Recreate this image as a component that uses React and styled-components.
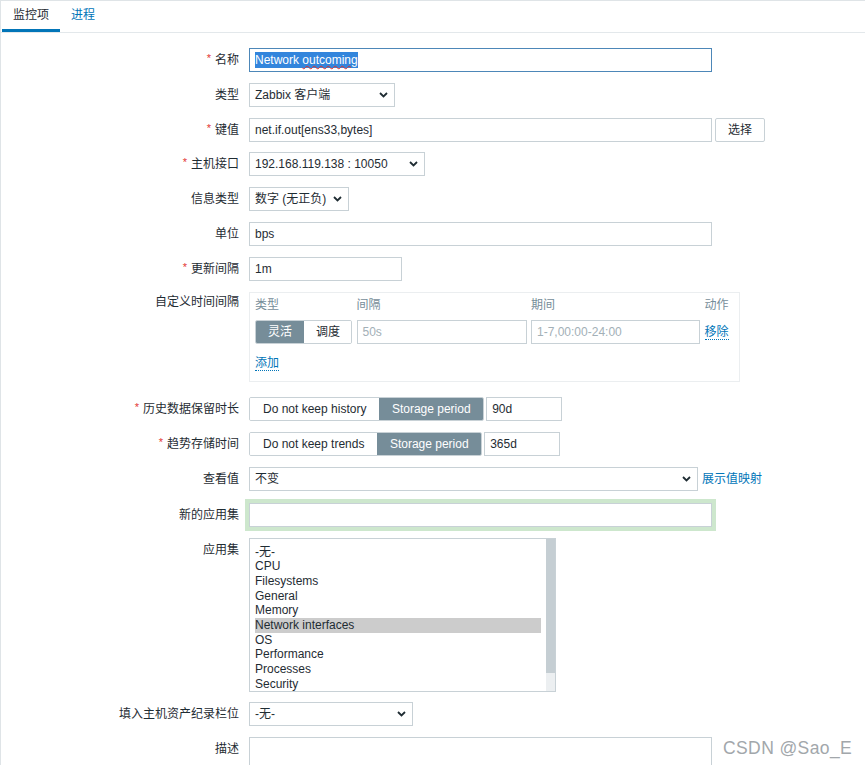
import React from 'react';
import styled, {createGlobalStyle} from "styled-components";

// 기본 폰트와 여백 초기화
const GlobalStyle = createGlobalStyle`
  html, body {
    margin: 0;
    padding: 0;
    overflow: hidden;
    background: #ffffff;
  }
  body {
    font-family: "Liberation Sans", Arial, "Noto Sans CJK SC", sans-serif;
    font-size: 12px;
    color: #1f2c33;
  }
`;

const Page = styled.div`
  position: relative;
  height: 764px;
  overflow: hidden;
  border-top: 1px solid #dfe4e7;
  border-left: 1px solid #dfe4e7;
  background: #fff;
`;

const TabBar = styled.div`
  display: flex;
  height: 31px;
  padding-left: 1px;
  border-bottom: 1px solid #e3e8eb;
`;

const Tab = styled.div`
  padding: 1px 11px 0;
  line-height: 27px;
  border-bottom: 3px solid ${props => props.$active ? "#0275b8" : "transparent"};
  color: ${props => props.$active ? "#1f2c33" : "#0275b8"};
`;

const Form = styled.div`
  display: grid;
  grid-template-columns: 238px 1fr;
  column-gap: 10px;
  row-gap: 10.8px;
  padding-top: 15px;
  align-items: start;
`;

const Label = styled.div`
  text-align: right;
  line-height: ${props => props.$lh || 24}px;
  margin-top: ${props => props.$mt || 0}px;
  white-space: nowrap;
  color: #1f2c33;
`;

const Star = styled.span`
  color: #e33734;
  margin-right: 4px;
  font-size: 11px;
  position: relative;
  top: -2px;
`;

const Field = styled.div`
  display: flex;
  align-items: center;
  gap: ${props => props.$gap || 0}px;
  margin-top: ${props => props.$mt || 0}px;
`;

const TextBox = styled.div`
  box-sizing: border-box;
  width: ${props => props.$w}px;
  height: ${props => props.$h || 24}px;
  border: 1px solid ${props => props.$focus ? "#4d87b8" : "#c8d1d6"};
  padding: 0 5px;
  line-height: 22px;
  background: #fff;
  color: ${props => props.$placeholder ? "#a3b0b7" : "#1f2c33"};
  white-space: nowrap;
  overflow: hidden;
  box-shadow: ${props => props.$glow ? "0 0 0 4px #cde7cd" : "none"};
`;

const Selected = styled.span`
  display: inline-block;
  background: #3385dc;
  color: #fff;
  line-height: 16px;
  margin-top: 3px;
  vertical-align: top;
`;

const Misspelled = styled.span`
  text-decoration: underline wavy #e0302a;
  text-decoration-thickness: 1px;
  text-underline-offset: 1px;
`;

const SelectBox = styled(TextBox)`
  display: flex;
  align-items: center;
  justify-content: space-between;
  padding-right: 6px;
`;

const Button = styled.div`
  box-sizing: border-box;
  height: 24px;
  padding: 0 12px;
  line-height: 22px;
  border: 1px solid #c8d1d6;
  border-radius: 2px;
  background: #fff;
  color: #1f2c33;
  white-space: nowrap;
`;

const Segmented = styled.div`
  display: flex;
  height: 24px;
  border: 1px solid #c8d1d6;
  border-radius: 2px;
  box-sizing: border-box;
  overflow: hidden;
`;

const SegButton = styled.div`
  padding: 0 ${props => props.$pad || 12}px;
  line-height: 22px;
  white-space: nowrap;
  background: ${props => props.$active ? "#768d99" : "#fff"};
  color: ${props => props.$active ? "#fff" : "#1f2c33"};
`;

const Link = styled.span`
  color: #0275b8;
  white-space: nowrap;
  border-bottom: ${props => props.$dotted ? "1px dotted #0275b8" : "none"};
  line-height: 14px;
`;

const IntervalBox = styled.div`
  box-sizing: border-box;
  width: 491px;
  height: 90px;
  border: 1px solid #ebeef0;
  padding: 5px 5px 10px;
  margin-bottom: 5px;
`;

const IntervalGrid = styled.div`
  display: grid;
  grid-template-columns: 97px 170px 169px auto;
  column-gap: 4.5px;
  row-gap: 7px;
  align-items: center;
`;

const ColHead = styled.div`
  color: #768d99;
  line-height: 15px;
`;

const AddRow = styled.div`
  margin-top: 12px;
  line-height: 15px;
`;

const ListBox = styled.div`
  box-sizing: border-box;
  width: 307px;
  height: 154px;
  border: 1px solid #c8d1d6;
  display: flex;
  overflow: hidden;
`;

const ListItems = styled.div`
  flex: 1;
  padding: 6px 5px 0 5px;
`;

const ListItem = styled.div`
  line-height: 14.7px;
  background: ${props => props.$selected ? "#cccccc" : "transparent"};
  white-space: nowrap;
`;

const ScrollTrack = styled.div`
  width: 9px;
  background: #eceff1;
  display: flex;
  flex-direction: column;
`;

const ScrollThumb = styled.div`
  height: 134px;
  background: #c5ced3;
`;

const Watermark = styled.div`
  position: absolute;
  left: 722px;
  top: 737px;
  font-size: 17.5px;
  letter-spacing: 0.4px;
  color: #a2a7ab;
`;

const Chevron = () => (
    <svg width="9" height="6" viewBox="0 0 9 6">
        <path d="M1 1 L4.5 4.5 L8 1" fill="none" stroke="#1f2c33" strokeWidth="1.8"/>
    </svg>
);

const Select = ({w, children}) => (
    <SelectBox $w={w}>
        <span>{children}</span>
        <Chevron/>
    </SelectBox>
);

const apps = ["-无-", "CPU", "Filesystems", "General", "Memory", "Network interfaces", "OS", "Performance", "Processes", "Security"];

function App() {
    return (
        <>
            <GlobalStyle/>
            <Page>
                <TabBar>
                    <Tab $active>监控项</Tab>
                    <Tab>进程</Tab>
                </TabBar>
                <Form>
                    <Label><Star>*</Star>名称</Label>
                    <Field>
                        <TextBox $w={463} $focus>
                            <Selected>Network <Misspelled>outcoming</Misspelled></Selected>
                        </TextBox>
                    </Field>

                    <Label>类型</Label>
                    <Field><Select w={146}>Zabbix 客户端</Select></Field>

                    <Label><Star>*</Star>键值</Label>
                    <Field $gap={3}>
                        <TextBox $w={463}>net.if.out[ens33,bytes]</TextBox>
                        <Button>选择</Button>
                    </Field>

                    <Label><Star>*</Star>主机接口</Label>
                    <Field><Select w={176}>192.168.119.138 : 10050</Select></Field>

                    <Label>信息类型</Label>
                    <Field><Select w={100}>数字 (无正负)</Select></Field>

                    <Label>单位</Label>
                    <Field><TextBox $w={463}>bps</TextBox></Field>

                    <Label><Star>*</Star>更新间隔</Label>
                    <Field><TextBox $w={153}>1m</TextBox></Field>

                    <Label $lh={20}>自定义时间间隔</Label>
                    <IntervalBox>
                        <IntervalGrid>
                            <ColHead>类型</ColHead>
                            <ColHead>间隔</ColHead>
                            <ColHead>期间</ColHead>
                            <ColHead>动作</ColHead>
                            <Segmented>
                                <SegButton $active>灵活</SegButton>
                                <SegButton>调度</SegButton>
                            </Segmented>
                            <TextBox $w={170} $placeholder>50s</TextBox>
                            <TextBox $w={169} $placeholder>1-7,00:00-24:00</TextBox>
                            <div><Link $dotted>移除</Link></div>
                        </IntervalGrid>
                        <AddRow><Link $dotted>添加</Link></AddRow>
                    </IntervalBox>

                    <Label><Star>*</Star>历史数据保留时长</Label>
                    <Field $gap={2}>
                        <Segmented>
                            <SegButton $pad={13}>Do not keep history</SegButton>
                            <SegButton $pad={12.5} $active>Storage period</SegButton>
                        </Segmented>
                        <TextBox $w={76}>90d</TextBox>
                    </Field>

                    <Label><Star>*</Star>趋势存储时间</Label>
                    <Field $gap={2}>
                        <Segmented>
                            <SegButton $pad={13}>Do not keep trends</SegButton>
                            <SegButton $pad={12.5} $active>Storage period</SegButton>
                        </Segmented>
                        <TextBox $w={76}>365d</TextBox>
                    </Field>

                    <Label>查看值</Label>
                    <Field $gap={4}>
                        <Select w={449}>不变</Select>
                        <Link>展示值映射</Link>
                    </Field>

                    <Label $mt={1}>新的应用集</Label>
                    <Field $mt={1}><TextBox $w={463} $glow/></Field>

                    <Label>应用集</Label>
                    <ListBox>
                        <ListItems>
                            {apps.map(a => (
                                <ListItem key={a} $selected={a === "Network interfaces"}>{a}</ListItem>
                            ))}
                        </ListItems>
                        <ScrollTrack><ScrollThumb/></ScrollTrack>
                    </ListBox>

                    <Label>填入主机资产纪录栏位</Label>
                    <Field><Select w={164}>-无-</Select></Field>

                    <Label>描述</Label>
                    <Field><TextBox $w={463} $h={60}/></Field>
                </Form>
                <Watermark>CSDN @Sao_E</Watermark>
            </Page>
        </>
    );
}

export default App;
